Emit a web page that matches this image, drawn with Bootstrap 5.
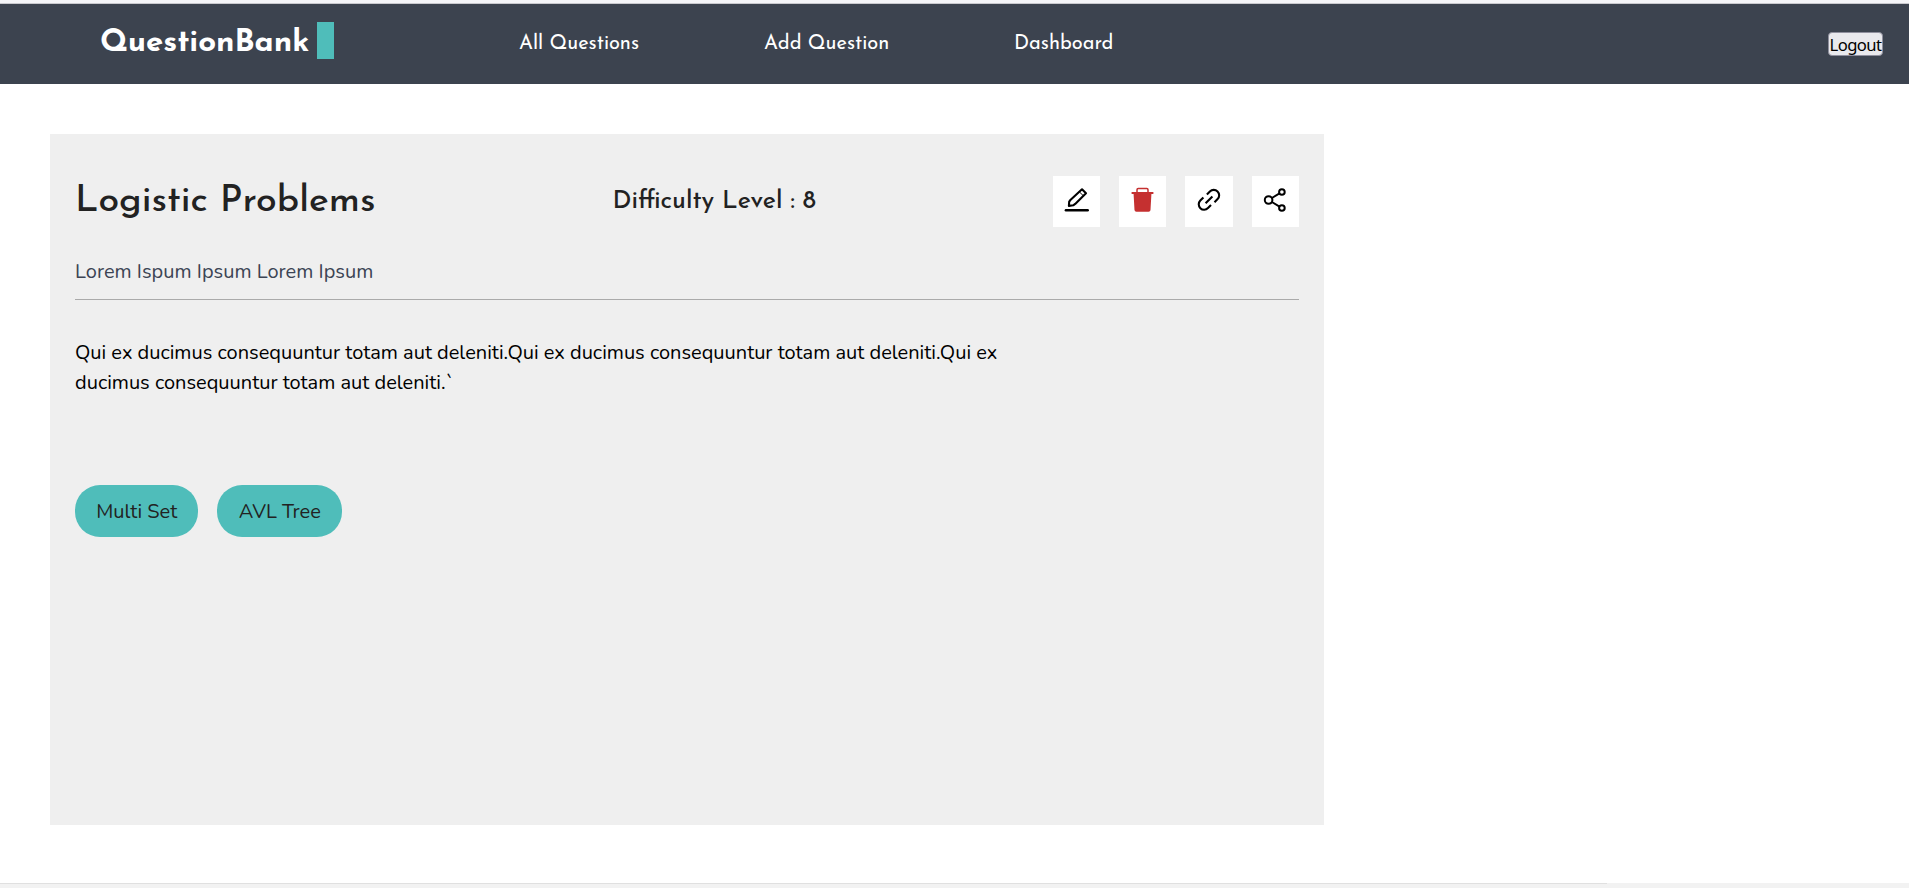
<!DOCTYPE html>
<html lang="en">
<head>
<meta charset="utf-8">
<meta name="viewport" content="width=device-width, initial-scale=1">
<title>QuestionBank</title>
<link rel="stylesheet" href="https://cdn.jsdelivr.net/npm/bootstrap@5.3.0/dist/css/bootstrap.min.css">
<style>
body{font-family:Nunito,Lato,"Liberation Sans",sans-serif;color:#000;height:888px;overflow:hidden;background:#fff}
.site-nav,.q-title,.q-level{font-family:"Josefin Sans",Lato,sans-serif}
.top-strip{height:4px;background:#f5f5f8;border-bottom:1px solid #c9c9ce}
.site-nav{height:80px;background:#3c434f;padding:0 26px 0 100px}
.brand{height:37px;margin-top:21px;font-size:31.25px;font-weight:700;line-height:37px;letter-spacing:-.07px;color:#fff;width:217px;white-space:nowrap}
.brand-block{width:17px;height:37px;margin-top:18px;background:#4fbdba}
.site-link{font-size:20px;line-height:30px;color:#fff;text-decoration:none;white-space:nowrap;margin-top:25px}
.site-link:hover{color:#4fbdba}
.link-first{margin-left:185px;width:245px}
.link-second{width:250px}
.logout{height:24px;width:55px;margin-top:28px;padding:1px 0 0;font:16.67px/21px "Noto Sans",sans-serif;letter-spacing:-.6px;border:1px solid #8f8f9d;border-radius:4px;background:#e9e9ed;color:#000;white-space:nowrap}
.question{width:1274px;height:691px;margin:50px 0 0 50px;padding:42px 25px 0;background:#efefef}
.q-head{height:51px}
.q-title{width:537.5px;font-size:37.5px;line-height:48px;font-weight:500;color:#222;white-space:nowrap}
.q-level{font-size:25px;line-height:32px;font-weight:500;color:#222;white-space:nowrap}
.q-tools{gap:19px}
.tool{width:47.3px;height:51px;background:#fff;border:0;padding:0;color:#000}
.tool svg{width:25px;height:25px;display:block;margin:-4px auto 0}
.tool-delete{color:#c53030}
.q-sub{margin-top:30px;height:43px;font-size:20px;line-height:30px;color:#3c4454;border-bottom:1px solid #aaa}
.q-body{margin-top:38px;width:950px;font-size:20px;line-height:30px}
.q-tags{margin-top:87px;gap:19px}
.tag{height:52px;padding:0 21.25px;border-radius:25px;background:#4fbdba;color:#222;font-size:20px;line-height:53px}
.bottom-strip{height:5px;margin-top:58px;background:#f2f2f2}
.bottom-line{width:1607px;height:1px;background:#e0e0e0}
</style>
<script src="https://cdn.jsdelivr.net/npm/bootstrap@5.3.0/dist/js/bootstrap.bundle.min.js"></script>
</head>
<body>
<div class="top-strip"></div>
<nav class="site-nav d-flex align-items-start">
  <span class="brand">QuestionBank</span><span class="brand-block"></span>
  <a class="site-link link-first" href="#">All Questions</a>
  <a class="site-link link-second" href="#">Add Question</a>
  <a class="site-link" href="#">Dashboard</a>
  <button class="logout ms-auto" type="button">Logout</button>
</nav>
<main class="question">
  <div class="q-head d-flex align-items-center">
    <h1 class="q-title m-0">Logistic Problems</h1>
    <h2 class="q-level m-0">Difficulty Level : 8</h2>
    <div class="q-tools d-flex ms-auto">
      <button class="tool" type="button" aria-label="Edit">
        <svg viewBox="0 0 25 25" fill="none" stroke="currentColor"><path d="M18 2.3 22 6.3 11.2 16.9 9.2 18.3 4.9 18.9 5.2 14.6 6.4 13z" stroke-width="2.1" stroke-linejoin="round"/><path d="M15.3 4.8 19.4 8.8" stroke-width="1"/><path d="M1.9 23.2h21.8" stroke-width="2.5" stroke-linecap="round"/></svg>
      </button>
      <button class="tool tool-delete" type="button" aria-label="Delete">
        <svg viewBox="0 0 25 25" fill="currentColor"><path d="M7 5.4V2.8Q7 1.6 8.2 1.6H16.8Q18 1.6 18 2.8V5.4" fill="none" stroke="currentColor" stroke-width="1.5"/><path d="M1.6 5.1H23.4V6.9H21.4L20.5 23Q20.4 24.8 18.6 24.8H6.4Q4.6 24.8 4.5 23L3.6 6.9H1.6z"/></svg>
      </button>
      <button class="tool" type="button" aria-label="Copy link">
        <svg viewBox="0 0 25 25" fill="none" stroke="currentColor" stroke-width="2.1"><path d="M9.9 7.5 12.9 4.5A5.4 5.4 0 0 1 20.6 12.1L17.5 15.2M14 18.1 11 21.1A5.4 5.4 0 0 1 3.3 13.5L6.4 10.4M8.6 16.3 15.4 9.5"/></svg>
      </button>
      <button class="tool" type="button" aria-label="Share">
        <svg viewBox="0 0 25 25" fill="none" stroke="currentColor" stroke-width="2"><circle cx="5.6" cy="13" r="3.8"/><circle cx="18.9" cy="5" r="2.8"/><circle cx="18.9" cy="21" r="2.8"/><path d="M8.9 11 16.5 6.4M8.9 15 16.5 19.6"/></svg>
      </button>
    </div>
  </div>
  <div class="q-sub">Lorem Ispum Ipsum Lorem Ipsum</div>
  <p class="q-body mb-0">Qui ex ducimus consequuntur totam aut deleniti.Qui ex ducimus consequuntur totam aut deleniti.Qui ex ducimus consequuntur totam aut deleniti.`</p>
  <div class="q-tags d-flex"><span class="tag">Multi Set</span><span class="tag">AVL Tree</span></div>
</main>
<div class="bottom-strip"><div class="bottom-line"></div></div>
</body>
</html>
